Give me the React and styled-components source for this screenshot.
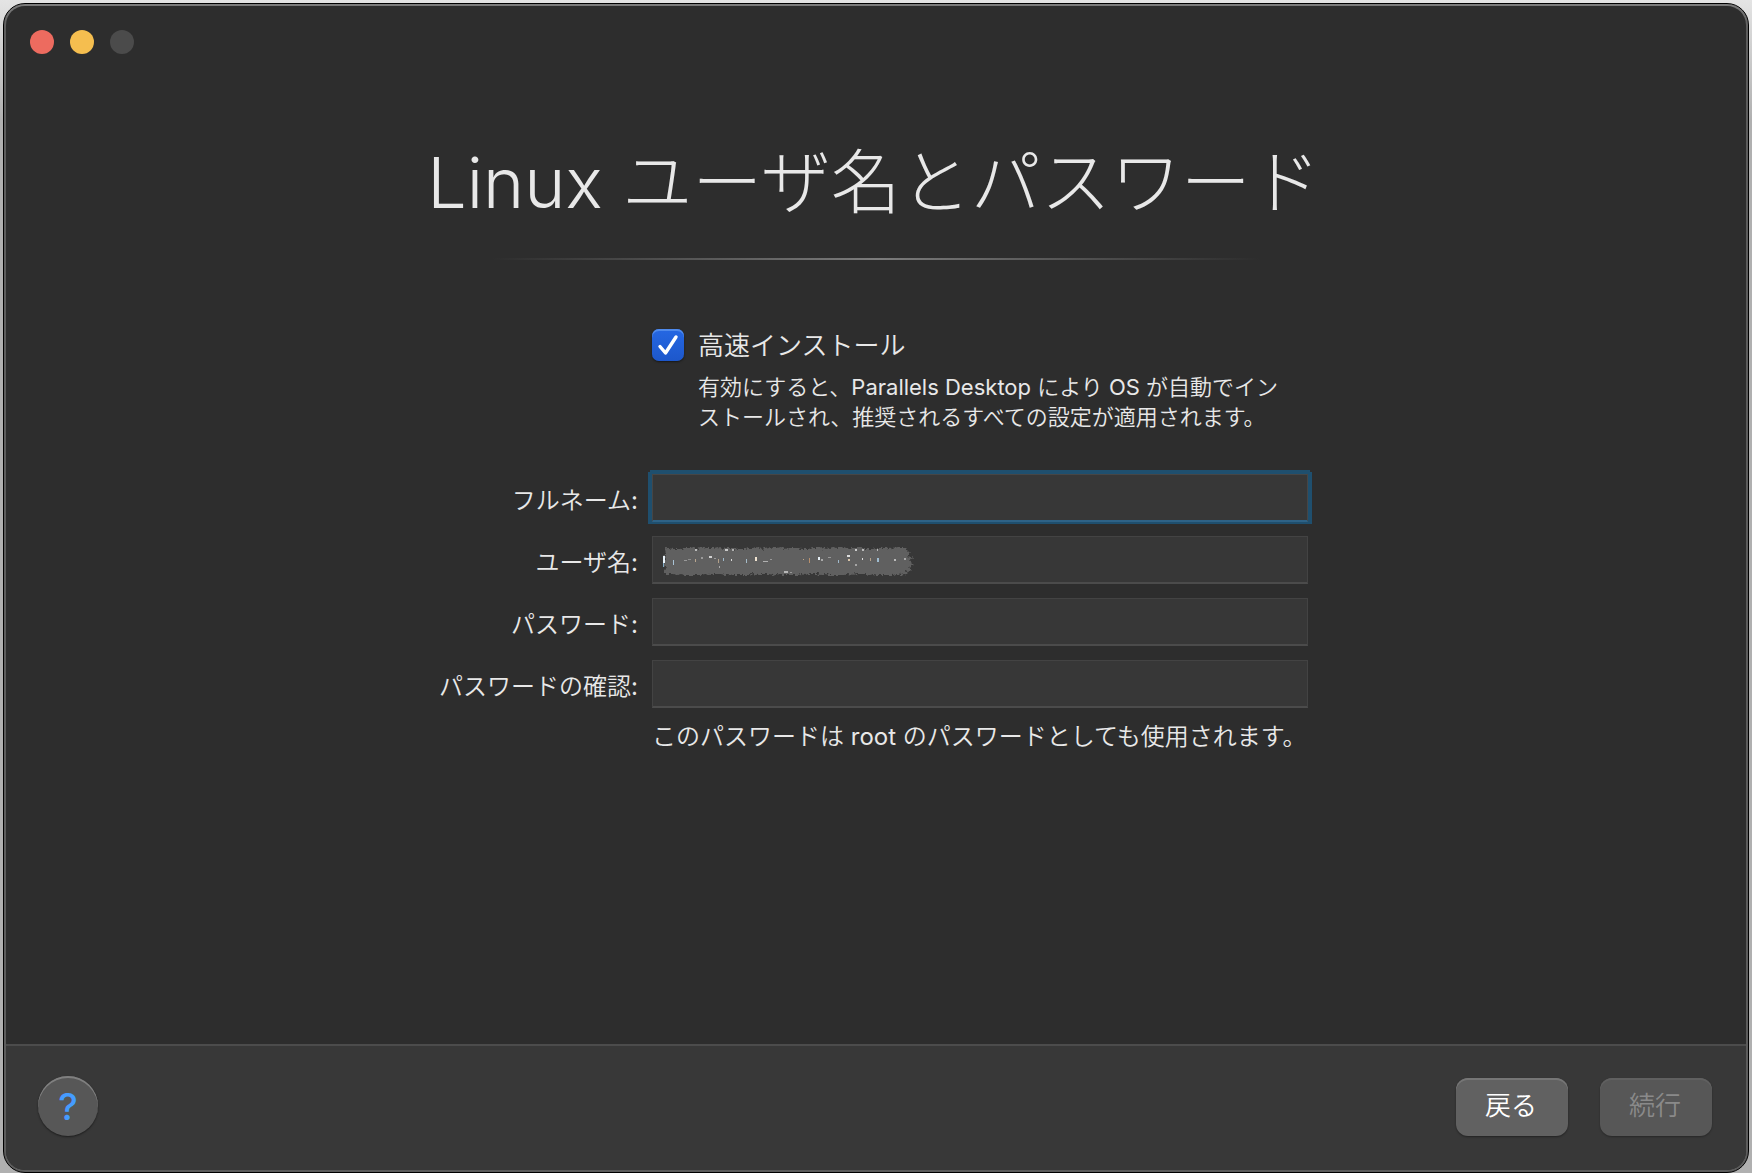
import React, { useState } from 'react';
import styled, { createGlobalStyle, css } from 'styled-components';

const GlobalStyle = createGlobalStyle`
  * {
    box-sizing: border-box;
  }

  body {
    margin: 0;
    background: linear-gradient(#e4e4e4, #b0b0b0 120px, #b0b0b0);
    color: #e8e8e8;
    font-family: Inter, 'Noto Sans CJK JP', sans-serif;
    font-weight: 350;
  }

  button, input {
    font-family: inherit;
    margin: 0;
  }
`;

const Desktop = styled.div`
  display: flex;
  min-height: 100vh;
  padding: 3px 3px 0;
`;

const Window = styled.main`
  flex: 1;
  display: flex;
  flex-direction: column;
  padding: 2px;
  border: 1px solid #000;
  border-radius: 22px;
  background: linear-gradient(#7c7c7c, #5c5c5c 24px, #5c5c5c);
`;

const WindowBody = styled.div`
  flex: 1;
  display: flex;
  flex-direction: column;
  border-radius: 19px;
  overflow: hidden;
  background: #2d2d2d;
`;

const TitleBar = styled.div`
  display: flex;
  gap: 16px;
  padding: 24px;
`;

const TrafficLight = styled.button`
  width: 24px;
  height: 24px;
  padding: 0;
  border: 0;
  border-radius: 50%;
  background: ${props => props.$color};
`;

const Content = styled.div`
  flex: 1;
  display: flex;
  flex-direction: column;
  align-items: center;
  padding-top: 55px;
`;

const Title = styled.h1`
  margin: 0;
  padding-right: 4px;
  font-size: 70px;
  font-weight: 300;
  line-height: 100px;
  white-space: nowrap;
`;

const Divider = styled.hr`
  width: 768px;
  max-width: 100%;
  height: 2px;
  margin: 25px 0 69px;
  border: 0;
  background: linear-gradient(90deg, transparent, #7c7c7c 50%, transparent);
`;

const Form = styled.form`
  display: grid;
  grid-template-columns: 202px 656px;
  column-gap: 14px;
  row-gap: 14px;
  padding-right: 8px;
`;

const ExpressInstall = styled.div`
  grid-column: 2;
  display: grid;
  grid-template-columns: 32px 1fr;
  column-gap: 14px;
  row-gap: 11px;
  align-items: center;
  margin-bottom: 28px;
`;

const CheckBoxBox = styled.span`
  position: relative;
  display: flex;
  width: 32px;
  height: 32px;
`;

const CheckBox = styled.input`
  appearance: none;
  width: 32px;
  height: 32px;
  border-radius: 7px;
  background: linear-gradient(#2567e3, #1d57cb);
  box-shadow: inset 0 2px 0 #4f8aec, 0 1px 2px rgba(0, 0, 0, 0.5);

  &:not(:checked) {
    background: #555;
    box-shadow: inset 0 2px 0 #6a6a6a;
  }
`;

const CheckMark = styled.svg`
  position: absolute;
  inset: 0;
  pointer-events: none;
`;

const CheckLabel = styled.label`
  padding-top: 2px;
  font-size: 26px;
  line-height: 30px;
`;

const Description = styled.p`
  grid-column: 2;
  margin: 0;
  font-size: 22px;
  line-height: 30px;
  white-space: nowrap;
`;

// latin words look thin beside the kana at the same weight
const Latin = styled.span`
  font-weight: 400;
  font-variation-settings: 'opsz' 14;
`;

const FieldLabel = styled.label`
  padding-top: 6px;
  font-size: 24px;
  line-height: 42px;
  text-align: right;
  white-space: nowrap;
`;

const FieldBox = styled.div`
  position: relative;
  display: flex;
`;

const TextField = styled.input`
  width: 100%;
  height: 48px;
  padding: 0 12px;
  border: 1px solid #434343;
  border-bottom: 2px solid #4b4b4b;
  border-radius: 0;
  outline: 0;
  background: #373737;
  color: #e8e8e8;
  font-size: 24px;

  ${props => props.$active && css`
    border-color: #464646;
    border-bottom-color: #2e6286;
    box-shadow: 0 -2px 0 2px #1f4f6e, 2px 0 0 2px #1f4f6e, -2px 0 0 2px #1f4f6e;
  `}
`;

const Scribble = styled.svg`
  position: absolute;
  left: 10px;
  top: 11px;
  pointer-events: none;
`;

const Note = styled.p`
  grid-column: 2;
  margin: -2px 0 0;
  font-size: 24px;
  line-height: 34px;
  white-space: nowrap;
`;

const Footer = styled.footer`
  display: flex;
  align-items: flex-end;
  gap: 32px;
  padding: 30px 34px 34px 32px;
  border-top: 2px solid #4c4c4c;
  background: #383838;
`;

const HelpButton = styled.button`
  width: 60px;
  height: 60px;
  margin-right: auto;
  padding: 2px 0 0;
  border: 0;
  border-radius: 50%;
  background: #575757;
  box-shadow: inset 0 2px 0 #808080, 0 1px 2px rgba(0, 0, 0, 0.5);
  color: #459cff;
  font-size: 37px;
  font-weight: 500;
  line-height: 58px;
`;

const PushButton = styled.button`
  width: 112px;
  height: 58px;
  padding: 0 2px 8px 0;
  border: 0;
  border-radius: 12px;
  background: #616161;
  box-shadow: inset 0 2px 0 #767676, 0 1px 2px rgba(0, 0, 0, 0.4);
  color: #fff;
  font-size: 26px;
  font-weight: 350;

  &:disabled {
    background: #575757;
    box-shadow: inset 0 2px 0 #606060, 0 1px 2px rgba(0, 0, 0, 0.3);
    color: #8a8a8a;
  }
`;

const TOP = [1, 0, 2, 1, 1, 2, 0, 1, 2, 1, 1, 0, 2, 1, 2, 1];
const BOTTOM = [27, 28, 27, 28, 28, 27, 28, 28, 27, 28, 27, 28];

// ragged outline of the marker strokes that hide the user name
const scribblePoints = () => {
  const points = [];
  for (let i = 0; i <= 60; i++) points.push(`${3 + i * 4},${TOP[(i * 7) % TOP.length]}`);
  points.push('248,6 245,9 251,11 248,15 252,18 247,20 250,23 244,24 245,28');
  for (let i = 60; i >= 0; i--) points.push(`${3 + i * 4},${BOTTOM[(i * 5) % BOTTOM.length]}`);
  points.push('2,24 4,21 1,18 4,13 2,9 4,6');
  return points.join(' ');
};

// [x, y, width, height, colour] of what still shows between the strokes
const SPECKS = [
  [1, 9, 2, 7, '#e9f3fb'], [1, 16, 1, 4, '#7fa9c4'], [11, 13, 1, 5, '#a9c3d6'],
  [22, 13, 3, 1, '#999'], [26, 12, 3, 1, '#8d8d8d'], [33, 2, 2, 2, '#bbb'],
  [33, 12, 1, 3, '#b9a68f'], [39, 10, 2, 2, '#9a9a9a'], [47, 9, 3, 2, '#d3d3d3'],
  [52, 11, 2, 1, '#999'], [56, 12, 1, 4, '#b3a089'], [57, 19, 1, 2, '#aaa'],
  [61, 11, 1, 3, '#9fb9cb'], [63, 2, 3, 2, '#c8c8c8'], [69, 12, 1, 2, '#d9d9d9'],
  [70, 2, 2, 2, '#b0b0b0'], [84, 12, 1, 4, '#a5bbc8'], [93, 10, 2, 4, '#f0e3d0'],
  [101, 14, 5, 1, '#b0b0b0'], [108, 12, 2, 1, '#999'], [122, 24, 4, 2, '#b8b8b8'],
  [128, 25, 2, 1, '#999'], [141, 12, 1, 1, '#c3a989'], [147, 11, 1, 5, '#b88f6b'],
  [156, 10, 2, 3, '#e5eff5'], [159, 12, 2, 2, '#aaa'], [166, 10, 3, 1, '#999'],
  [176, 13, 1, 3, '#9fb9cb'], [185, 8, 3, 2, '#ddd'], [186, 12, 2, 2, '#d9c4a8'],
  [193, 2, 2, 2, '#ccc'], [193, 17, 2, 2, '#a5a5a5'], [200, 2, 2, 2, '#bbb'],
  [200, 11, 1, 2, '#ddd'], [208, 11, 1, 3, '#b3a089'], [215, 2, 1, 2, '#b5b5b5'],
  [215, 11, 2, 4, '#9fbcd0'], [232, 12, 2, 2, '#bbb'], [242, 11, 2, 2, '#a9a9a9'],
];

function HiddenName() {
  return (
    <Scribble width="256" height="34" aria-hidden="true">
      <defs>
        <filter id="rough" x="-2%" y="-10%" width="104%" height="120%">
          <feTurbulence type="fractalNoise" baseFrequency="0.4" numOctaves="2" seed="4" result="noise" />
          <feDisplacementMap
            in="SourceGraphic"
            in2="noise"
            scale="6"
            xChannelSelector="R"
            yChannelSelector="G"
          />
          <feGaussianBlur stdDeviation="0.6" />
        </filter>
      </defs>
      <polygon points={scribblePoints()} fill="#606060" filter="url(#rough)" />
      {SPECKS.map(([x, y, width, height, fill]) => (
        <rect key={`${x}-${y}`} x={x} y={y} width={width} height={height} fill={fill} />
      ))}
    </Scribble>
  );
}

const FIELDS = [
  { id: 'fullname', label: 'フルネーム', type: 'text', active: true },
  { id: 'username', label: 'ユーザ名', type: 'text', hidden: true },
  { id: 'password', label: 'パスワード', type: 'password' },
  { id: 'confirm', label: 'パスワードの確認', type: 'password' },
];

export default function App() {
  const [express, setExpress] = useState(true);

  return (
    <>
      <GlobalStyle />
      <Desktop>
        <Window>
          <WindowBody>
            <TitleBar>
              <TrafficLight $color="#ed6b5f" aria-label="閉じる" />
              <TrafficLight $color="#f5be4f" aria-label="しまう" />
              <TrafficLight $color="#4b4b4b" aria-label="拡大" disabled />
            </TitleBar>
            <Content>
              <Title>Linux ユーザ名とパスワード</Title>
              <Divider />
              <Form>
                <ExpressInstall>
                  <CheckBoxBox>
                    <CheckBox
                      id="express"
                      type="checkbox"
                      checked={express}
                      onChange={e => setExpress(e.target.checked)}
                    />
                    {express && (
                      <CheckMark width="32" height="32" viewBox="0 0 32 32" aria-hidden="true">
                        <path
                          d="M8 17.5 L13.5 24 L24 8"
                          fill="none"
                          stroke="#fff"
                          strokeWidth="3.4"
                          strokeLinecap="round"
                          strokeLinejoin="round"
                        />
                      </CheckMark>
                    )}
                  </CheckBoxBox>
                  <CheckLabel htmlFor="express">高速インストール</CheckLabel>
                  <Description>
                    有効にすると、<Latin>Parallels Desktop </Latin>により<Latin> OS </Latin>が自動でイン
                    <br />
                    ストールされ、推奨されるすべての設定が適用されます。
                  </Description>
                </ExpressInstall>
                {FIELDS.map(field => (
                  <React.Fragment key={field.id}>
                    <FieldLabel htmlFor={field.id}>{field.label}<Latin>:</Latin></FieldLabel>
                    <FieldBox>
                      <TextField id={field.id} type={field.type} $active={field.active} />
                      {field.hidden && <HiddenName />}
                    </FieldBox>
                  </React.Fragment>
                ))}
                <Note>このパスワードは<Latin> root </Latin>のパスワードとしても使用されます。</Note>
              </Form>
            </Content>
            <Footer>
              <HelpButton aria-label="ヘルプ">?</HelpButton>
              <PushButton>戻る</PushButton>
              <PushButton disabled>続行</PushButton>
            </Footer>
          </WindowBody>
        </Window>
      </Desktop>
    </>
  );
}
